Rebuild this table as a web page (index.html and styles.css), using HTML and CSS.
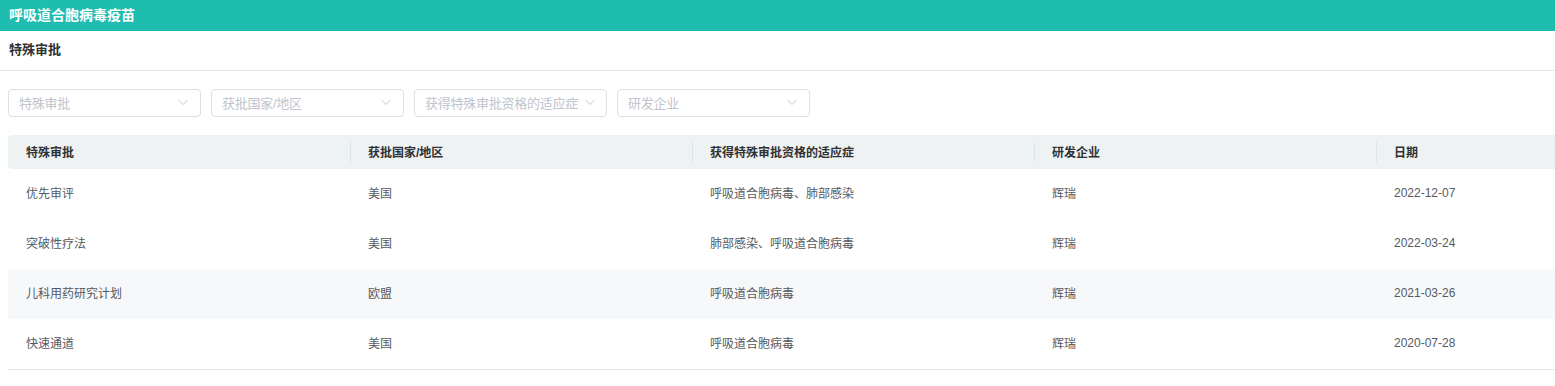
FILE: index.html
```html
<!DOCTYPE html>
<html lang="zh-CN">
<head>
    <meta charset="UTF-8">
    <meta name="viewport" content="width=device-width, initial-scale=1.0">
    <title>呼吸道合胞病毒疫苗</title>
    <link rel="stylesheet" href="styles.css">
</head>
<body>
<div class="page-title">呼吸道合胞病毒疫苗</div>
<div class="section-head">特殊审批</div>

<div class="filters">
    <div class="select"><span class="select-text">特殊审批</span><svg class="arrow" viewBox="0 0 12 12"><path d="M1.5 4l4.5 4.5 4.5-4.5"/></svg></div>
    <div class="select"><span class="select-text">获批国家/地区</span><svg class="arrow" viewBox="0 0 12 12"><path d="M1.5 4l4.5 4.5 4.5-4.5"/></svg></div>
    <div class="select"><span class="select-text">获得特殊审批资格的适应症</span><svg class="arrow" viewBox="0 0 12 12"><path d="M1.5 4l4.5 4.5 4.5-4.5"/></svg></div>
    <div class="select"><span class="select-text">研发企业</span><svg class="arrow" viewBox="0 0 12 12"><path d="M1.5 4l4.5 4.5 4.5-4.5"/></svg></div>
</div>

<div class="table-wrap">
    <table class="data-table">
        <colgroup>
            <col class="col-std">
            <col class="col-std">
            <col class="col-std">
            <col class="col-std">
            <col>
        </colgroup>
        <thead>
        <tr>
            <th>特殊审批</th>
            <th>获批国家/地区</th>
            <th>获得特殊审批资格的适应症</th>
            <th>研发企业</th>
            <th>日期</th>
        </tr>
        </thead>
        <tbody>
        <tr>
            <td>优先审评</td>
            <td>美国</td>
            <td>呼吸道合胞病毒、肺部感染</td>
            <td>辉瑞</td>
            <td>2022-12-07</td>
        </tr>
        <tr>
            <td>突破性疗法</td>
            <td>美国</td>
            <td>肺部感染、呼吸道合胞病毒</td>
            <td>辉瑞</td>
            <td>2022-03-24</td>
        </tr>
        <tr class="striped">
            <td>儿科用药研究计划</td>
            <td>欧盟</td>
            <td>呼吸道合胞病毒</td>
            <td>辉瑞</td>
            <td>2021-03-26</td>
        </tr>
        <tr>
            <td>快速通道</td>
            <td>美国</td>
            <td>呼吸道合胞病毒</td>
            <td>辉瑞</td>
            <td>2020-07-28</td>
        </tr>
        </tbody>
    </table>
</div>
</body>
</html>
```

FILE: styles.css
```css
:root {
    --primary: #1fbdb0;
    --text-main: #303133;
    --text-body: #555a61;
    --placeholder: #c0c4cc;
    --border: #dcdfe6;
    --line: #e8e8ec;
    --head-bg: #eef2f3;
    --stripe-bg: #f7f8fa;
}

body {
    margin: 0;
    background: #fff;
    font-family: "Liberation Sans", "Noto Sans CJK SC", sans-serif;
    color: var(--text-main);
}

.page-title {
    height: 31px;
    line-height: 30px;
    padding-left: 9px;
    background: var(--primary);
    color: #fff;
    font-size: 14px;
    font-weight: 700;
}

.section-head {
    height: 39px;
    line-height: 38px;
    padding-left: 9px;
    font-size: 13px;
    font-weight: 700;
    border-bottom: 1px solid var(--line);
}

.filters {
    display: flex;
    gap: 10px;
    padding: 18px 8px 0;
}

.select {
    width: 193px;
    height: 28px;
    box-sizing: border-box;
    border: 1px solid var(--border);
    border-radius: 4px;
    display: flex;
    align-items: center;
    justify-content: space-between;
    gap: 6px;
    padding: 0 11px 2px 10px;
}

.select-text {
    font-size: 13px;
    letter-spacing: -0.25px;
    color: var(--placeholder);
    white-space: nowrap;
}

.arrow {
    width: 12px;
    height: 12px;
    flex: none;
}

.arrow path {
    fill: none;
    stroke: var(--placeholder);
    stroke-width: 1;
}

.table-wrap {
    padding: 18px 0 0 8px;
}

.data-table {
    width: 100%;
    table-layout: fixed;
    border-collapse: collapse;
    font-size: 12px;
}

.col-std {
    width: 342px;
}

.data-table th {
    position: relative;
    height: 32px;
    padding: 0 18px 2px;
    background: var(--head-bg);
    text-align: left;
    font-weight: 700;
    color: var(--text-main);
}

.data-table th:first-child {
    border-radius: 4px 0 0 4px;
}

.data-table th + th::before {
    content: "";
    position: absolute;
    left: 0;
    top: 7px;
    height: 20px;
    border-left: 1px solid #d8e6e6;
}

.data-table td {
    height: 47px;
    padding: 0 18px 3px;
    color: var(--text-body);
}

.data-table tr.striped td {
    background: var(--stripe-bg);
}

.data-table tbody tr:last-child td {
    border-bottom: 1px solid var(--line);
}
```
